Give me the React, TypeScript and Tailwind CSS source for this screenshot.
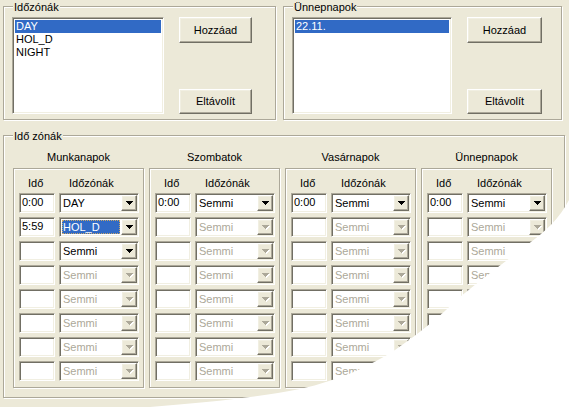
import React from "react";

const SUNKEN =
  "border border-t-[#ACA899] border-l-[#ACA899] border-r-white border-b-white shadow-[inset_1px_1px_0_#716F64,inset_-1px_-1px_0_#F1EFE2]";
const RAISED =
  "border border-t-white border-l-white border-r-[#716F64] border-b-[#716F64] shadow-[inset_-1px_-1px_0_#ACA899,inset_1px_1px_0_#F1EFE2] bg-[#ECE9D8]";
const ETCHED =
  "border border-[#ACA899] shadow-[inset_1px_1px_0_#fff,1px_1px_0_#fff]";

function Arrow({ disabled }: { disabled?: boolean }) {
  const c = disabled ? "#ACA899" : "#000";
  return (
    <svg width="8" height="5" viewBox="0 0 8 5" shapeRendering="crispEdges">
      {disabled && (
        <g fill="#fff">
          <rect x="1" y="1" width="7" height="1" />
          <rect x="2" y="2" width="5" height="1" />
          <rect x="3" y="3" width="3" height="1" />
          <rect x="4" y="4" width="1" height="1" />
        </g>
      )}
      <g fill={c}>
        <rect x="0" y="0" width="7" height="1" />
        <rect x="1" y="1" width="5" height="1" />
        <rect x="2" y="2" width="3" height="1" />
        <rect x="3" y="3" width="1" height="1" />
      </g>
    </svg>
  );
}

function Group({
  label,
  className,
  labelLeft,
  children,
}: {
  label: string;
  className: string;
  labelLeft?: string;
  children?: React.ReactNode;
}) {
  return (
    <div className={`relative ${ETCHED} ${className}`}>
      <span
        className={`absolute -top-[6px] ${labelLeft ?? "left-[9px]"} bg-[#ECE9D8] px-[1px] leading-[13px] whitespace-nowrap`}
      >
        {label}
      </span>
      {children}
    </div>
  );
}

function Button({ label, className }: { label: string; className: string }) {
  return (
    <div className={`${RAISED} flex items-center justify-center leading-[13px] ${className}`}>
      {label}
    </div>
  );
}

type Row = { time: string; zone: string; enabled: boolean; selected?: boolean };

function Combo({ row }: { row: Row }) {
  return (
    <div className={`${SUNKEN} bg-white w-[80px] h-[20px] p-[1px] flex`}>
      <div className="flex-1 min-w-0 p-[1px] flex">
        {row.selected ? (
          <div className="flex-1 bg-[#316AC5] text-white outline outline-1 outline-dotted outline-[#C9A86A] -outline-offset-1 leading-[14px] pl-[1px]">
            {row.zone}
          </div>
        ) : (
          <div
            className={`flex-1 leading-[14px] pl-[1px] ${row.enabled ? "text-black" : "text-[#ACA899]"}`}
          >
            {row.zone}
          </div>
        )}
      </div>
      <div className={`${RAISED} w-[16px] h-[16px] flex items-center justify-center pl-[1px]`}>
        <Arrow disabled={!row.enabled} />
      </div>
    </div>
  );
}

function Column({ title, rows }: { title: string; rows: Row[] }) {
  return (
    <div className="flex flex-col w-[131px]">
      <div className="h-[13px] leading-[13px] text-center mb-[4px]">{title}</div>
      <div className={`${ETCHED} h-[220px] pt-[8px] pl-[5px] pr-[4px]`}>
        <div className="flex h-[13px] leading-[13px] mb-[3px]">
          <div className="w-[40px] pl-[9px]">Idő</div>
          <div className="pl-[10px]">Időzónák</div>
        </div>
        <div className="flex flex-col gap-[4px]">
          {rows.map((r, i) => (
            <div key={i} className="flex gap-[4px]">
              <div className={`${SUNKEN} bg-white w-[36px] h-[20px] leading-[16px] pl-[2px]`}>
                {r.time}
              </div>
              <Combo row={r} />
            </div>
          ))}
        </div>
      </div>
    </div>
  );
}

function makeRows(first: Row[]): Row[] {
  const rows = [...first];
  while (rows.length < 8) rows.push({ time: "", zone: "Semmi", enabled: false });
  return rows;
}

export default function App() {
  const cols = [
    {
      title: "Munkanapok",
      rows: makeRows([
        { time: "0:00", zone: "DAY", enabled: true },
        { time: "5:59", zone: "HOL_D", enabled: true, selected: true },
        { time: "", zone: "Semmi", enabled: true },
      ]),
    },
    { title: "Szombatok", rows: makeRows([{ time: "0:00", zone: "Semmi", enabled: true }]) },
    { title: "Vasárnapok", rows: makeRows([{ time: "0:00", zone: "Semmi", enabled: true }]) },
    { title: "Ünnepnapok", rows: makeRows([{ time: "0:00", zone: "Semmi", enabled: true }]) },
  ];

  return (
    <div
      className={`relative w-[569px] h-[407px] overflow-hidden bg-[#ECE9D8] text-black text-[11px] font-['Liberation_Sans',Arial,sans-serif] pt-[6px] pl-[3px]`}
    >
      <div className="flex gap-[7px]">
        <Group label="Időzónák" className="w-[273px] h-[114px] pt-[10px] pl-[8px] flex">
          <div className={`${SUNKEN} bg-white w-[152px] h-[97px] p-[2px]`}>
            <div className="h-[13px] leading-[13px] bg-[#316AC5] text-white pl-[1px]">DAY</div>
            <div className="h-[13px] leading-[13px] pl-[1px]">HOL_D</div>
            <div className="h-[13px] leading-[13px] pl-[1px]">NIGHT</div>
          </div>
          <div className="ml-[15px] flex flex-col justify-between h-[97px]">
            <Button label="Hozzáad" className="w-[73px] h-[26px]" />
            <Button label="Eltávolít" className="w-[73px] h-[25px]" />
          </div>
        </Group>
        <Group label="Ünnepnapok" className="w-[279px] h-[114px] pt-[10px] pl-[8px] flex">
          <div className={`${SUNKEN} bg-white w-[160px] h-[97px] p-[2px]`}>
            <div className="h-[13px] leading-[13px] bg-[#316AC5] text-white pl-[1px]">22.11.</div>
          </div>
          <div className="ml-[15px] flex flex-col justify-between h-[97px]">
            <Button label="Hozzáad" className="w-[75px] h-[26px]" />
            <Button label="Eltávolít" className="w-[75px] h-[25px]" />
          </div>
        </Group>
      </div>

      <Group label="Idő zónák" className="mt-[15px] w-[562px] h-[263px] pt-[15px] pl-[9px]">
        <div className="flex gap-[5px]">
          {cols.map((c) => (
            <Column key={c.title} title={c.title} rows={c.rows} />
          ))}
        </div>
      </Group>

      <svg
        className="absolute inset-0 pointer-events-none"
        width="569"
        height="407"
        viewBox="0 0 569 407"
      >
        <path
          d="M569,200 C560,218 545,232 527,245 C505,262 480,280 460,297 C440,316 420,333 395,350 C370,366 340,380 300,389 C260,397 210,402 150,407 L569,407 Z"
          fill="#fff"
        />
      </svg>
    </div>
  );
}
